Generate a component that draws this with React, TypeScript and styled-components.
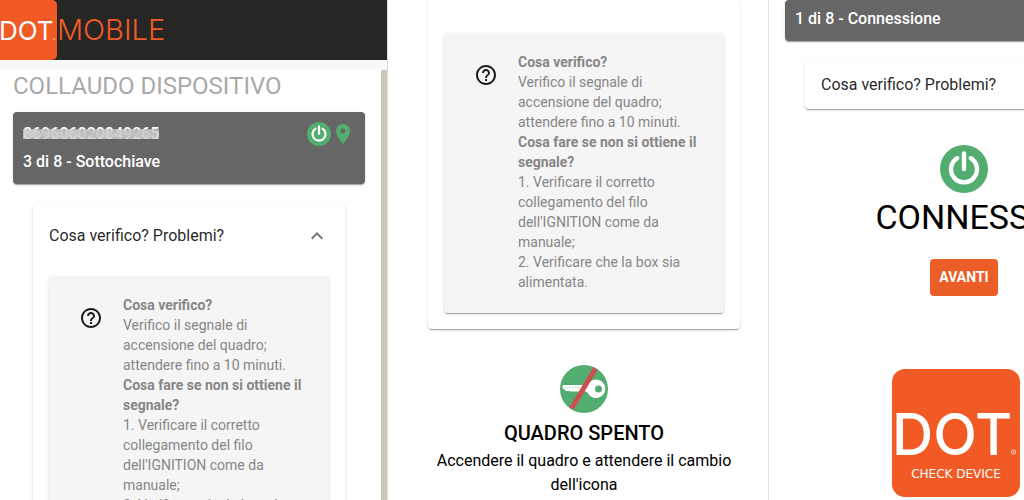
import React from "react";
import styled, { createGlobalStyle } from "styled-components";

const GlobalStyle = createGlobalStyle`
  *, *::before, *::after { box-sizing: border-box; }
  body { margin: 0; background: #fff; font-family: Roboto, sans-serif; color: #000; }
  h1, h2, p { margin: 0; }
`;

const green = "#54ad70";
const orange = "#f15a24";

const Page = styled.div`
  display: grid;
  grid-template-columns: 388fr 381fr 255fr;
  height: 100vh;
  overflow: hidden;
`;

const Panel = styled.section`
  min-width: 0;
  overflow: hidden;
  display: flex;
  flex-direction: column;
  border-right: 1px solid #dedede;
  &:last-child { border-right: 0; }
`;

const AppBar = styled.header`
  flex: none;
  height: 60px;
  background: #272624;
  svg { display: block; }
`;

const Strip = styled.div`
  flex: none;
  height: 10px;
  background: #f8f8f8;
`;

const ScrollArea = styled.div`
  flex: 1;
  min-height: 0;
  overflow: hidden;
  padding: 0 16px 0 13px;
  border-right: 6px solid #ccc4b9;
`;

const Title = styled.h1`
  font-size: 24px;
  line-height: 32px;
  font-weight: 400;
  color: #a9a9a9;
  white-space: nowrap;
`;

const shadow = "0 2px 1px -1px rgba(0,0,0,.2), 0 1px 1px rgba(0,0,0,.14), 0 1px 3px rgba(0,0,0,.12)";

const StatusCard = styled.div`
  display: flex;
  justify-content: space-between;
  align-items: flex-start;
  margin-top: 10px;
  padding: 8px 10px;
  border-radius: 4px;
  background: #666;
  color: #fff;
  font-size: 16px;
  line-height: 28px;
  font-weight: 500;
  box-shadow: ${shadow};
`;

const Serial = styled.p`
  position: relative;
  width: max-content;
  &::after {
    content: "";
    position: absolute;
    inset: 9px 0 9px 0;
    background: rgba(225, 225, 225, .5);
    backdrop-filter: blur(3px);
  }
`;

const StatusIcons = styled.div`
  display: flex;
  align-items: center;
  padding-top: 2px;
  svg { display: block; }
`;

const HelpCard = styled.div<{ $flush?: boolean }>`
  margin: ${(p) => (p.$flush ? "0" : "20px 20px 0")};
  padding: 0 16px 16px;
  border-radius: 4px;
  background: #fff;
  box-shadow: ${shadow};
`;

const HelpToggle = styled.button<{ $closed?: boolean }>`
  display: flex;
  align-items: center;
  justify-content: space-between;
  width: 100%;
  height: ${(p) => (p.$closed ? "48px" : "64px")};
  margin-bottom: ${(p) => (p.$closed ? "-16px" : "8px")};
  padding: 0;
  border: 0;
  background: none;
  color: rgba(0, 0, 0, .87);
  font: 400 16px/24px Roboto, sans-serif;
  white-space: nowrap;
  cursor: pointer;
`;

const HelpBox = styled.div`
  display: grid;
  grid-template-columns: 58px 1fr;
  padding: 19px 16px 21px;
  border-radius: 4px;
  background: #f5f5f5;
  box-shadow: ${shadow};
  svg { display: block; margin: 11px 0 0 14px; }
`;

const HelpText = styled.p`
  font-size: 14px;
  line-height: 20px;
  color: #868686;
  strong { font-weight: 700; }
`;

const MiddleContent = styled.div`
  padding: 0 28px 0 40px;
`;

const HelpSpacer = styled.div`
  height: 33px;
`;

const Result = styled.div`
  display: flex;
  flex-direction: column;
  align-items: center;
  padding-top: 36px;
  text-align: center;
  svg { display: block; }
`;

const ResultTitle = styled.h2`
  margin-top: 8px;
  font-size: 20px;
  line-height: 24px;
  font-weight: 500;
`;

const ResultText = styled.p`
  margin-top: 4px;
  font-size: 16px;
  line-height: 24px;
`;

const WideContent = styled.div`
  width: 374px;
  padding-left: 16px;
`;

const StepCard = styled(StatusCard)`
  margin-top: 0;
  padding-top: 5px;
`;

const StepTitle = styled.h2`
  margin-top: 4px;
  font-size: 34px;
  line-height: 40px;
  font-weight: 400;
`;

const NextButton = styled.button`
  height: 37px;
  margin-top: 22px;
  padding: 0 9px 2px;
  border: 0;
  border-radius: 4px;
  background: #eb5e28;
  color: #fff;
  font: 700 14px/20px Roboto, sans-serif;
  cursor: pointer;
`;

const AppLogo = styled.div`
  display: flex;
  justify-content: center;
  margin-top: 73px;
  padding-right: 16px;
`;

const MobileLogo = () => (
  <svg width="180" height="60" viewBox="0 0 180 60" role="img" aria-label="DOT.MOBILE">
    <rect x="-10" width="67" height="60" rx="5" fill={orange} />
    <g fontFamily="Inter, sans-serif">
      <text x="-1" y="40" fontSize="26" fill="#fff">DOT</text>
      <circle cx="54" cy="39" r="1" fill="#fbb394" />
      <text x="57" y="40" fontSize="29" fontWeight="300" fill={orange}>MOBILE</text>
    </g>
  </svg>
);

const CheckLogo = () => (
  <svg width="128" height="128" viewBox="0 0 128 128" role="img" aria-label="DOT Check Device">
    <rect width="128" height="128" rx="13" fill={orange} />
    <g fill="#fff">
      <text x="0" y="86" fontSize="57" fontWeight="500" fontFamily="Inter, sans-serif">DOT</text>
      <g fill="none" stroke="#fff" strokeWidth=".6">
        <circle cx="121.5" cy="83" r="2.2" />
        <circle cx="121.5" cy="83" r=".7" />
      </g>
      <text x="64" y="109" fontSize="12" textAnchor="middle" fontFamily="DejaVu Sans, sans-serif">CHECK DEVICE</text>
    </g>
  </svg>
);

const PowerIcon = ({ size }: { size: number }) => (
  <svg width={size} height={size} viewBox="0 0 48 48" aria-hidden="true">
    <circle cx="24" cy="24" r="24" fill={green} />
    <path d="M17.2 13.2a13 13 0 1 0 13.6 0M24 8.5v15.5" fill="none" stroke="#fff" strokeWidth="4.4" strokeLinecap="round" />
  </svg>
);

const PinIcon = () => (
  <svg width="24" height="24" viewBox="0 0 24 24" aria-hidden="true">
    <path fill={green} d="M12 2C8.13 2 5 5.13 5 9c0 5.25 7 13 7 13s7-7.75 7-13c0-3.87-3.13-7-7-7zm0 9.5a2.5 2.5 0 0 1 0-5 2.5 2.5 0 0 1 0 5z" />
  </svg>
);

const ChevronUp = () => (
  <svg width="24" height="24" viewBox="0 0 24 24" aria-hidden="true">
    <path fill="#757575" d="M7.41 15.41 12 10.83l4.59 4.58L18 14l-6-6-6 6z" />
  </svg>
);

const HelpIcon = () => (
  <svg width="24" height="24" viewBox="0 0 24 24" aria-hidden="true">
    <path fill="#1c1c1c" d="M11 18h2v-2h-2v2zm1-16C6.48 2 2 6.48 2 12s4.48 10 10 10 10-4.48 10-10S17.52 2 12 2zm0 18c-4.41 0-8-3.59-8-8s3.59-8 8-8 8 3.59 8 8-3.59 8-8 8zm0-14c-2.21 0-4 1.79-4 4h2c0-1.1.9-2 2-2s2 .9 2 2c0 2-3 1.75-3 5h2c0-2.25 3-2.5 3-5 0-2.21-1.79-4-4-4z" />
  </svg>
);

const KeyOffIcon = () => (
  <svg width="48" height="48" viewBox="0 0 48 48" aria-hidden="true">
    <circle cx="24" cy="24" r="24" fill={green} />
    <path fill="#fff" fillRule="evenodd" d="M3 20h24.5a9.3 9.3 0 1 1 0 7.500l-3-1.500h-3l-1 1-1.500-1-1.500 1-1.500-1-1.500 1-1.500-1-1.500 1-1.500-1H6l-3.500-3zM38.500 20.500a3.500 3.500 0 1 0 0 7 3.500 3.500 0 0 0 0-7z" />
    <path d="M5 22.500h18" stroke="#d9eee0" strokeWidth="1" />
    <path d="M35.500 3.500 11.500 43.500" stroke="#cc504d" strokeWidth="5" />
  </svg>
);

const HelpContent = () => (
  <HelpBox>
    <HelpIcon />
    <HelpText>
      <strong>Cosa verifico?</strong><br />
      Verifico il segnale di accensione del quadro; attendere fino a 10 minuti.<br />
      <strong>Cosa fare se non si ottiene il segnale?</strong><br />
      1. Verificare il corretto collegamento del filo dell'IGNITION come da manuale;<br />
      2. Verificare che la box sia alimentata.
    </HelpText>
  </HelpBox>
);

export default function App() {
  return (
    <>
      <GlobalStyle />
      <Page>
        <Panel>
          <AppBar><MobileLogo /></AppBar>
          <Strip />
          <ScrollArea>
            <Title>COLLAUDO DISPOSITIVO</Title>
            <StatusCard>
              <div>
                <Serial>869606020849265</Serial>
                <p>3 di 8 - Sottochiave</p>
              </div>
              <StatusIcons><PowerIcon size={24} /><PinIcon /></StatusIcons>
            </StatusCard>
            <HelpCard>
              <HelpToggle aria-expanded="true">Cosa verifico? Problemi?<ChevronUp /></HelpToggle>
              <HelpContent />
            </HelpCard>
          </ScrollArea>
        </Panel>
        <Panel>
          <MiddleContent>
            <HelpCard $flush>
              <HelpSpacer />
              <HelpContent />
            </HelpCard>
            <Result>
              <KeyOffIcon />
              <ResultTitle>QUADRO SPENTO</ResultTitle>
              <ResultText>Accendere il quadro e attendere il cambio dell'icona</ResultText>
            </Result>
          </MiddleContent>
        </Panel>
        <Panel>
          <WideContent>
            <StepCard>1 di 8 - Connessione</StepCard>
            <HelpCard>
              <HelpToggle $closed aria-expanded="false">Cosa verifico? Problemi?</HelpToggle>
            </HelpCard>
            <Result>
              <PowerIcon size={48} />
              <StepTitle>CONNESSO</StepTitle>
              <NextButton>AVANTI</NextButton>
            </Result>
            <AppLogo><CheckLogo /></AppLogo>
          </WideContent>
        </Panel>
      </Page>
    </>
  );
}
